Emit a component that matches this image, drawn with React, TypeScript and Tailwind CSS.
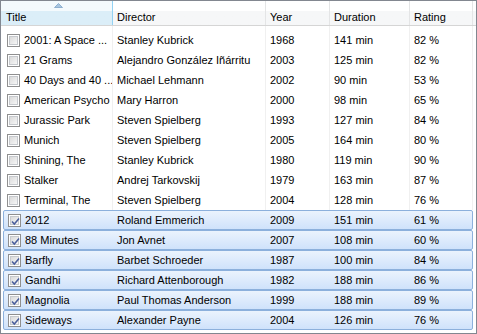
const movies = [
  { title: "2001: A Space ...", director: "Stanley Kubrick", year: 1968, duration: 141, rating: 82, checked: false },
  { title: "21 Grams", director: "Alejandro González Iñárritu", year: 2003, duration: 125, rating: 82, checked: false },
  { title: "40 Days and 40 ...", director: "Michael Lehmann", year: 2002, duration: 90, rating: 53, checked: false },
  { title: "American Psycho", director: "Mary Harron", year: 2000, duration: 98, rating: 65, checked: false },
  { title: "Jurassic Park", director: "Steven Spielberg", year: 1993, duration: 127, rating: 84, checked: false },
  { title: "Munich", director: "Steven Spielberg", year: 2005, duration: 164, rating: 80, checked: false },
  { title: "Shining, The", director: "Stanley Kubrick", year: 1980, duration: 119, rating: 90, checked: false },
  { title: "Stalker", director: "Andrej Tarkovskij", year: 1979, duration: 163, rating: 87, checked: false },
  { title: "Terminal, The", director: "Steven Spielberg", year: 2004, duration: 128, rating: 76, checked: false },
  { title: "2012", director: "Roland Emmerich", year: 2009, duration: 151, rating: 61, checked: true },
  { title: "88 Minutes", director: "Jon Avnet", year: 2007, duration: 108, rating: 60, checked: true },
  { title: "Barfly", director: "Barbet Schroeder", year: 1987, duration: 100, rating: 84, checked: true },
  { title: "Gandhi", director: "Richard Attenborough", year: 1982, duration: 188, rating: 86, checked: true },
  { title: "Magnolia", director: "Paul Thomas Anderson", year: 1999, duration: 188, rating: 89, checked: true },
  { title: "Sideways", director: "Alexander Payne", year: 2004, duration: 126, rating: 76, checked: true },
];

function CheckBox({ checked }: { checked: boolean }) {
  return (
    <div className="flex h-[13px] w-[13px] shrink-0 items-center justify-center border border-[#8f8f8f] bg-white p-px">
      <div className="relative h-full w-full border border-[#c6c9cd] bg-gradient-to-br from-[#dadada] to-[#f6f6f6]">
        {checked && (
          <svg className="absolute -left-px -top-px" width="11" height="11" viewBox="0 0 11 11">
            <path d="M2 5.5 L4.3 8 L9 2.5" fill="none" stroke="#4a5e9c" strokeWidth="1.5" />
          </svg>
        )}
      </div>
    </div>
  );
}

function HeaderCell({ label, width, sorted }: { label: string; width: string; sorted?: boolean }) {
  return (
    <div
      className={
        sorted
          ? `${width} relative h-full border-r border-[#93d2f3] bg-gradient-to-b from-[#f4fafd] from-40% to-[#dbeef8] to-40% pl-[5px] pt-[8px]`
          : `${width} h-full border-r border-[#e4e5e6] bg-gradient-to-b from-white from-40% to-[#f6f7f8] to-40% pl-[4px] pt-[8px]`
      }
    >
      {sorted && (
        <svg className="absolute left-[53px] top-[2px]" width="9" height="5" viewBox="0 0 9 5">
          <path d="M0.5 4.5 L4.5 0.5 L8.5 4.5 Z" fill="#a9c6e0" stroke="#7fa5c9" strokeWidth="0.8" />
        </svg>
      )}
      <span className="leading-[15px]">{label}</span>
    </div>
  );
}

export default function App() {
  return (
    <div className="h-[334px] w-[477px] overflow-hidden border border-[#828790] bg-white font-['Liberation_Sans',Arial,sans-serif] text-[11px] text-black">
      <div className="flex h-[25px] border-b border-[#d5d5d5]">
        <HeaderCell label="Title" width="w-[112px]" sorted />
        <HeaderCell label="Director" width="w-[153px]" />
        <HeaderCell label="Year" width="w-[64px]" />
        <HeaderCell label="Duration" width="w-[80px]" />
        <HeaderCell label="Rating" width="w-[63px]" />
        <div className="h-full flex-1 bg-gradient-to-b from-white from-40% to-[#f6f7f8] to-40%" />
      </div>

      <div className="flex h-[4px]">
        <div className="w-[112px] border-r border-[#f0f0f0]" />
        <div className="w-[153px] border-r border-[#f0f0f0]" />
        <div className="w-[64px] border-r border-[#f0f0f0]" />
        <div className="w-[80px] border-r border-[#f0f0f0]" />
        <div className="w-[63px] border-r border-[#f0f0f0]" />
      </div>

      {movies.map((m) =>
        m.checked ? (
          <div
            key={m.title}
            className="ml-[2px] flex h-[20px] w-[470px] items-center rounded-[2px] border border-[#8cb0dc] bg-gradient-to-b from-[#ebf3fd] to-[#cfe2fb]"
          >
            <div className="flex w-[109px] items-center gap-[4px] overflow-hidden pl-[4px]">
              <CheckBox checked />
              <span className="whitespace-nowrap">{m.title}</span>
            </div>
            <div className="w-[153px] overflow-hidden whitespace-nowrap pl-[4px]">{m.director}</div>
            <div className="w-[64px] pl-[4px]">{m.year}</div>
            <div className="w-[80px] pl-[4px]">{m.duration} min</div>
            <div className="w-[62px] pl-[4px]">{m.rating} %</div>
          </div>
        ) : (
          <div key={m.title} className="flex h-[20px] items-center">
            <div className="flex h-full w-[112px] items-center gap-[4px] overflow-hidden border-r border-[#f0f0f0] pl-[6px]">
              <CheckBox checked={false} />
              <span className="whitespace-nowrap">{m.title}</span>
            </div>
            <div className="flex h-full w-[153px] items-center overflow-hidden whitespace-nowrap border-r border-[#f0f0f0] pl-[4px]">{m.director}</div>
            <div className="flex h-full w-[64px] items-center border-r border-[#f0f0f0] pl-[4px]">{m.year}</div>
            <div className="flex h-full w-[80px] items-center border-r border-[#f0f0f0] pl-[4px]">{m.duration} min</div>
            <div className="flex h-full w-[63px] items-center border-r border-[#f0f0f0] pl-[4px]">{m.rating} %</div>
          </div>
        )
      )}
    </div>
  );
}
